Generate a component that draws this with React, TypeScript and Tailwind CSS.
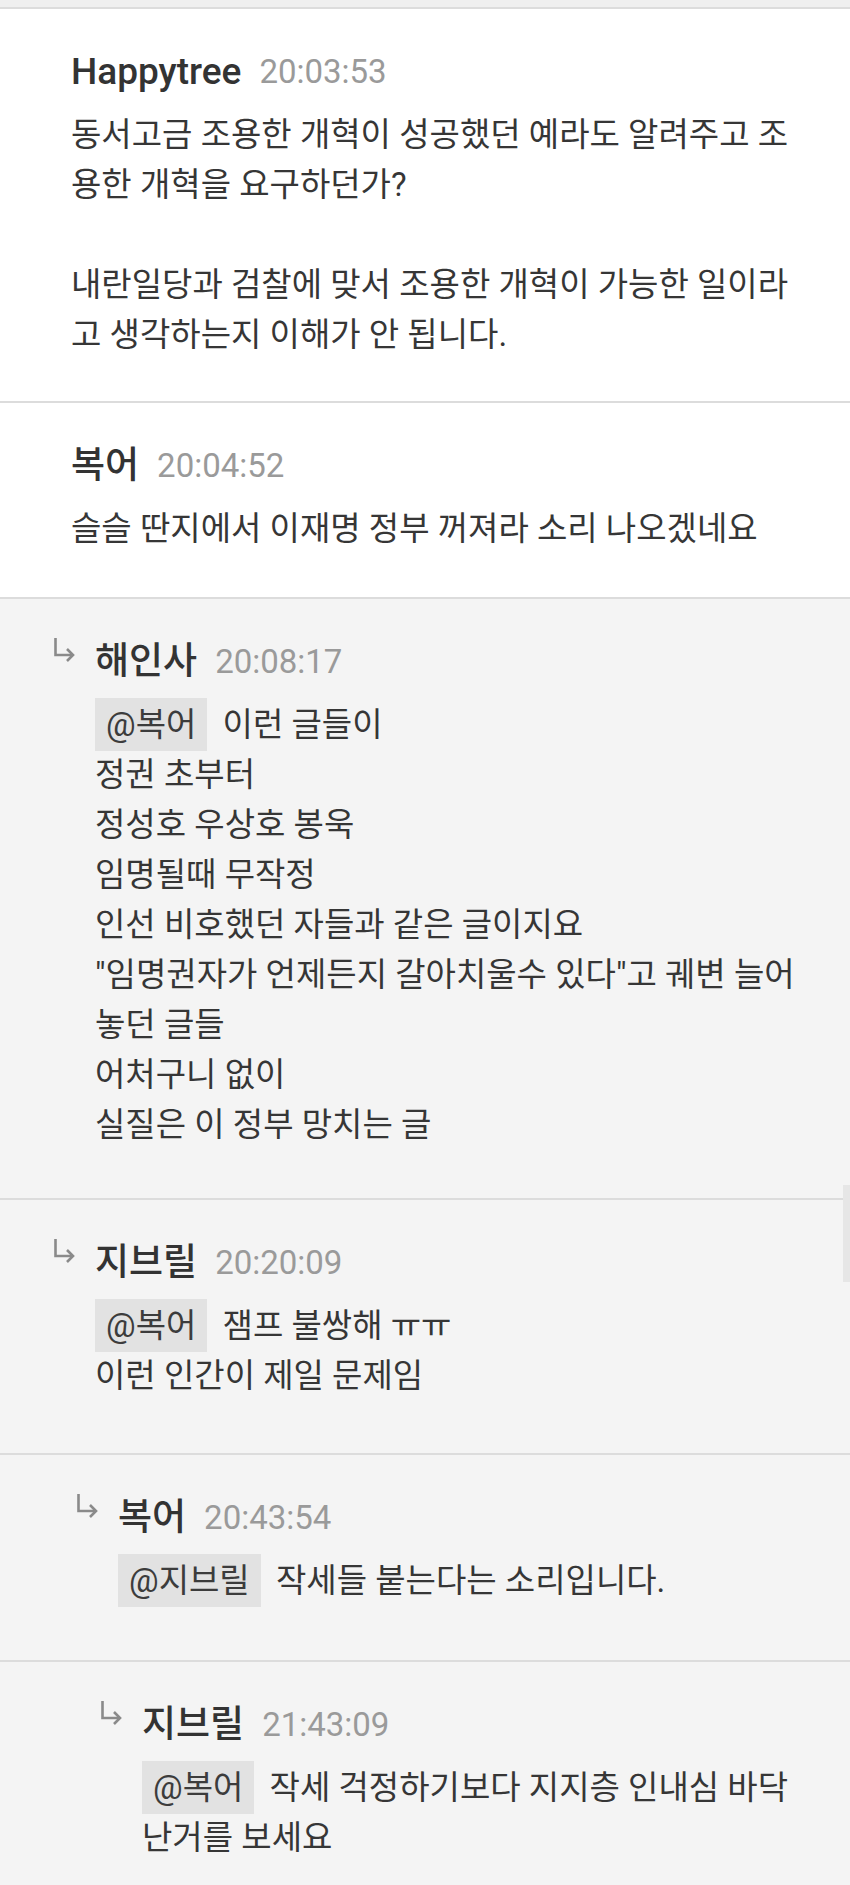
import { ReactNode } from "react";

interface CommentProps {
  depth: number;
  name: string;
  time: string;
  pb: string;
  children: ReactNode;
}

function ReplyArrow() {
  return (
    <svg width="24" height="28" viewBox="0 0 24 28" fill="none" stroke="#8a8a8a" strokeWidth="2.6">
      <path d="M3.5 2 V19 H21" />
      <path d="M15 13 L21 19 L15 25" />
    </svg>
  );
}

function Mention({ name }: { name: string }) {
  return (
    <span className="inline-block bg-[#e2e2e2] px-[11px] py-[2px] -my-[2px] leading-[49px] mr-[7px] text-[#3c3c3c]">
      @{name}
    </span>
  );
}

function Comment({ depth, name, time, pb, children }: CommentProps) {
  const isReply = depth > 0;
  const padLeft = ["pl-[71px]", "pl-[52px]", "pl-[75px]", "pl-[99px]"][depth];

  return (
    <div
      className={`border-t-2 border-[#dcdcdc] pr-[40px] pt-[41px] ${padLeft} ${pb} ${
        isReply ? "bg-[#f4f4f4]" : "bg-white"
      }`}
    >
      <div className="flex items-center h-[44px]">
        {isReply && (
          <span className="w-[43px] shrink-0 self-start -mt-[4px]">
            <ReplyArrow />
          </span>
        )}
        <span className="text-[37px] leading-[44px] font-medium text-[#333]">{name}</span>
        <span className="ml-[18px] text-[33px] leading-[44px] text-[#9a9a9a]">{time}</span>
      </div>
      <div className={`mt-[16px] text-[33px] leading-[50px] text-[#363636] ${isReply ? "pl-[43px]" : ""}`}>
        {children}
      </div>
    </div>
  );
}

export default function App() {
  return (
    <div className="relative w-[850px] h-[1885px] overflow-hidden bg-[#f4f4f4] font-['Roboto','Noto_Sans_CJK_KR',sans-serif]">
      <div className="h-[7px] bg-[#efefef]" />

      <Comment depth={0} name="Happytree" time="20:03:53" pb="pb-[41px]">
        <p>동서고금 조용한 개혁이 성공했던 예라도 알려주고 조용한 개혁을 요구하던가?</p>
        <p>&nbsp;</p>
        <p>내란일당과 검찰에 맞서 조용한 개혁이 가능한 일이라고 생각하는지 이해가 안 됩니다.</p>
      </Comment>

      <Comment depth={0} name="복어" time="20:04:52" pb="pb-[43px]">
        <p>슬슬 딴지에서 이재명 정부 꺼져라 소리 나오겠네요</p>
      </Comment>

      <Comment depth={1} name="해인사" time="20:08:17" pb="pb-[48px]">
        <p>
          <Mention name="복어" /> 이런 글들이
        </p>
        <p>정권 초부터</p>
        <p>정성호 우상호 봉욱</p>
        <p>임명될때 무작정</p>
        <p>인선 비호했던 자들과 같은 글이지요</p>
        <p>"임명권자가 언제든지 갈아치울수 있다"고 궤변 늘어놓던 글들</p>
        <p>어처구니 없이</p>
        <p>실질은 이 정부 망치는 글</p>
      </Comment>

      <Comment depth={1} name="지브릴" time="20:20:09" pb="pb-[52px]">
        <p>
          <Mention name="복어" /> 잼프 불쌍해 ㅠㅠ
        </p>
        <p>이런 인간이 제일 문제임</p>
      </Comment>

      <Comment depth={2} name="복어" time="20:43:54" pb="pb-[54px]">
        <p>
          <Mention name="지브릴" /> 작세들 붙는다는 소리입니다.
        </p>
      </Comment>

      <Comment depth={3} name="지브릴" time="21:43:09" pb="pb-[52px]">
        <p>
          <Mention name="복어" /> 작세 걱정하기보다 지지층 인내심 바닥난거를 보세요
        </p>
      </Comment>

      <div className="absolute right-0 top-[1185px] w-[7px] h-[97px] bg-[#e6e6e6]" />
    </div>
  );
}
